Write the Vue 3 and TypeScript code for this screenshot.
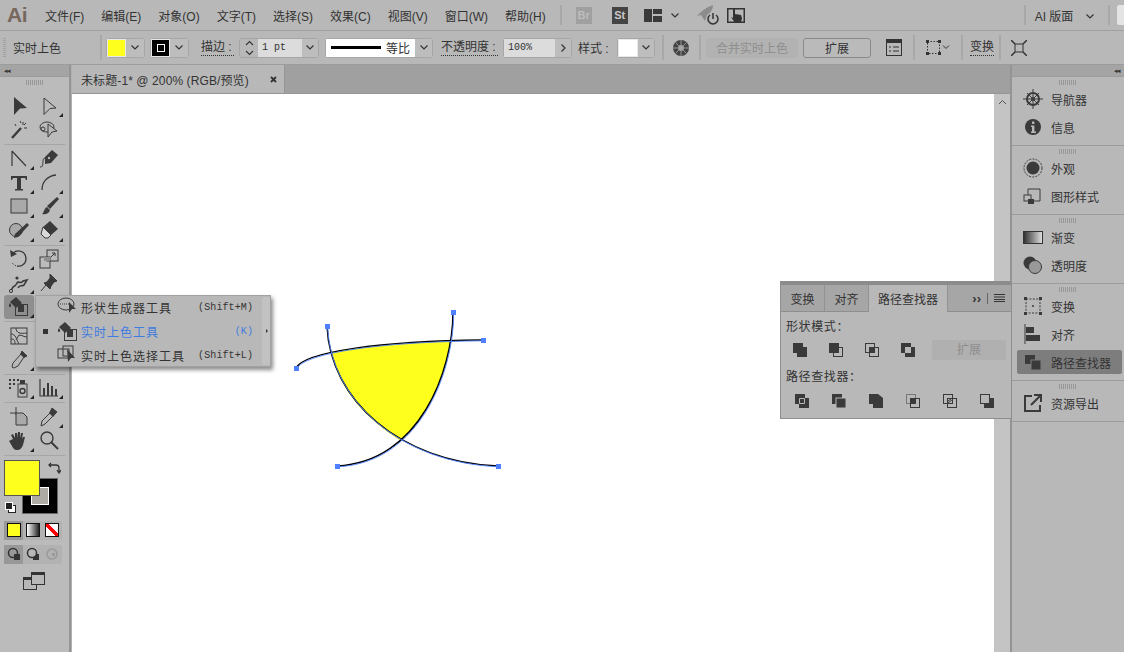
<script setup lang="ts">
interface Tool {
  svg: string
  more?: boolean
  active?: boolean
}

const menus = ['文件(F)', '编辑(E)', '对象(O)', '文字(T)', '选择(S)', '效果(C)', '视图(V)', '窗口(W)', '帮助(H)']

const ink = '#3a3a3a'
const livePaint = `<path d="M2 6l6-5 6 6-6 5z" fill="${ink}"/><path d="M2 7c-1.5 2-1.5 4 0 4s1.5-2 0-4z" fill="${ink}"/><rect x="7.5" y="8.5" width="12" height="11" fill="none" stroke="${ink}"/><rect x="10" y="9" width="6" height="7" fill="${ink}"/>`

const toolGroups: Tool[][][] = [
  [
    [
      { svg: `<path d="M6 2l13 11-7 .5-6 6.5z" fill="${ink}"/>` },
      { svg: `<path d="M6 3l12 10-6 .5-6 6z" fill="none" stroke="${ink}"/>`, more: true },
    ],
    [
      { svg: `<path d="M4 19L13 9" stroke="${ink}" stroke-width="2.4"/><path d="M15 3v3M12 2l1 2M18 4l-2 2M19 9h-3M7 5l1 2M12 9l1 1" stroke="${ink}"/>` },
      { svg: `<ellipse cx="9" cy="8" rx="7" ry="5" fill="none" stroke="${ink}"/><circle cx="5" cy="10" r="2" fill="none" stroke="${ink}"/><path d="M10 5l9 7-5 1-4 5z" fill="#b8b8b8" stroke="${ink}"/>` },
    ],
  ],
  [
    [
      { svg: `<path d="M4 3v15M4 3l14 15" fill="none" stroke="${ink}" stroke-width="1.2"/>`, more: true },
      { svg: `<path d="M2 19c5 1 1-9 5-9" fill="none" stroke="${ink}"/><path d="M7 9l7-7 6 5-7 8-6 1z" fill="${ink}"/><circle cx="11" cy="10" r="1.2" fill="#b8b8b8"/>` },
    ],
    [
      { svg: `<path d="M3 4h16v4h-1l-1-2h-4v11h2v1.5H7V17h2V6H5L4 8H3z" fill="${ink}"/>`, more: true },
      { svg: `<path d="M4 18c0-8 5-14 14-15" fill="none" stroke="${ink}" stroke-width="1.3"/>`, more: true },
    ],
    [
      { svg: `<rect x="3" y="3" width="16" height="14" fill="#a9a9a9" stroke="${ink}"/>`, more: true },
      { svg: `<path d="M19 1l2 2-9 10-3-3z" fill="${ink}"/><path d="M9 11l3 3c-1 4-5 5-8 4 2-1 2-6 5-7z" fill="${ink}"/>`, more: true },
    ],
    [
      { svg: `<circle cx="8" cy="10" r="6.5" fill="#a9a9a9" stroke="${ink}"/><path d="M19 3l2 2-11 12-4 1 1-4z" fill="${ink}"/>`, more: true },
      { svg: `<path d="M12 1l8 8-7 6-8-8z" fill="${ink}"/><path d="M5 7l8 8-3 3H7l-4-4z" fill="#d8d8d8" stroke="${ink}"/>`, more: true },
    ],
  ],
  [
    [
      { svg: `<path d="M5 5c5-4 13-2 13 6 0 5-5 8-9 7" fill="none" stroke="${ink}" stroke-width="1.3"/><path d="M2 2l1 7 6-3z" fill="${ink}"/><path d="M8 18l-4-3" stroke="${ink}" stroke-dasharray="1.5 1.5"/>`, more: true },
      { svg: `<rect x="2" y="9" width="10" height="11" fill="none" stroke="${ink}"/><rect x="9" y="2" width="11" height="11" fill="none" stroke="${ink}"/><rect x="6" y="9" width="6" height="4" fill="#909090"/><path d="M13 9l4-4M14 5h3v3" stroke="${ink}" fill="none"/>` },
    ],
    [
      { svg: `<path d="M3 19c3-8 3-2 6-8 2-3 3 2 6-2l4-1-3 5c-3 2-4-1-6 3" fill="none" stroke="${ink}" stroke-width="1.6"/><circle cx="3" cy="19" r="1.6" fill="#b8b8b8" stroke="${ink}"/><circle cx="9" cy="6" r="1.6" fill="${ink}"/>`, more: true },
      { svg: `<path d="M12 2l7 7-3 1-3 4-1 3-6-6 3-1 3-4zM8 13l-5 6" fill="${ink}" stroke="${ink}"/>` },
    ],
    [{ svg: livePaint, more: true, active: true }, { svg: '' }],
  ],
  [
    [
      { svg: `<rect x="3" y="3" width="16" height="16" fill="none" stroke="${ink}"/><path d="M3 9c5 0 5 5 8 10M8 3c0 5 4 6 11 5M11 10c3 0 5 2 8 2M3 14c3 0 4 1 4 5M11 10L8 15" fill="none" stroke="${ink}"/>` },
      { svg: '' },
    ],
    [
      { svg: `<path d="M14 2l5 5-3 1-6 9-4 2-2-1 1-4 8-9z" fill="#b8b8b8" stroke="${ink}"/><path d="M14 2l5 5-3 2-4-4z" fill="${ink}"/>`, more: true },
      { svg: '' },
    ],
  ],
  [
    [
      { svg: `<path d="M1 2h2v2H1zM5 2h2v2H5zM1 6h2v2H1zM5 6h2v2H5zM1 10h2v2H1zM9 2h2v2H9z" fill="${ink}"/><rect x="10" y="7" width="9" height="13" fill="none" stroke="${ink}"/><circle cx="14.5" cy="14" r="2.5" fill="none" stroke="${ink}" stroke-width="1.4"/><rect x="12" y="3" width="5" height="4" fill="${ink}"/>`, more: true },
      { svg: `<path d="M2 2v17h18" fill="none" stroke="${ink}" stroke-width="1.2"/><path d="M5 11h2v8H5zM9 6h2v13H9zM13 9h2v10h-2zM17 12h2v7h-2z" fill="${ink}"/>`, more: true },
    ],
  ],
  [
    [
      { svg: `<path d="M8 1v8M2 7h7" stroke="${ink}"/><path d="M8 7h7l4 4v8H8z" fill="#a9a9a9" stroke="${ink}"/>` },
      { svg: `<path d="M14 2l5 4-4 4-8 8-4 2 1-5 8-8z" fill="none" stroke="${ink}"/><path d="M14 2l5 4-4 5-4-4z" fill="${ink}"/>`, more: true },
    ],
    [
      { svg: `<path d="M5 9l-2-4 2-1 2 4V3h2v5l1-6h2v6l1-5h2l-1 6 1-2h2l-2 8c-1 3-3 5-6 5-3 0-4-2-5-4L1 11l2-1z" fill="${ink}"/>`, more: true },
      { svg: `<circle cx="9" cy="8" r="6" fill="none" stroke="${ink}" stroke-width="1.4"/><path d="M13 12l7 7" stroke="${ink}" stroke-width="2"/>` },
    ],
  ],
]

const flyout = [
  { label: '形状生成器工具', key: '(Shift+M)', svg: `<ellipse cx="9" cy="7" rx="8" ry="6" fill="none" stroke="${ink}"/><path d="M3 7h9" stroke="${ink}" stroke-dasharray="1 1"/><path d="M12 5l7 7-4 0-3 4z" fill="${ink}"/>` },
  { label: '实时上色工具', key: '(K)', svg: livePaint, current: true },
  { label: '实时上色选择工具', key: '(Shift+L)', svg: `<rect x="1" y="4" width="11" height="9" fill="none" stroke="${ink}"/><rect x="6" y="1" width="10" height="10" fill="none" stroke="${ink}"/><path d="M10 4l8 9-4 0-3 4z" fill="${ink}"/>` },
]

const dockGroups = [
  [
    { label: '导航器', svg: `<circle cx="10" cy="10" r="6" fill="none" stroke="${ink}" stroke-width="2"/><circle cx="10" cy="10" r="2" fill="${ink}"/><path d="M10 0v20M0 10h20M4 4l12 12M16 4L4 16" stroke="${ink}"/>` },
    { label: '信息', svg: `<circle cx="10" cy="10" r="8" fill="${ink}"/><rect x="9" y="4.5" width="2.4" height="2.4" fill="#b8b8b8"/><path d="M8 8.5h3.4v6H13v1.4H8v-1.4h1v-4.6H8z" fill="#b8b8b8"/>` },
  ],
  [
    { label: '外观', svg: `<circle cx="10" cy="10" r="6.5" fill="${ink}"/><circle cx="10" cy="10" r="9" fill="none" stroke="${ink}" stroke-dasharray="2 1.2"/>` },
    { label: '图形样式', svg: `<path d="M5 9V3h12v12H9" fill="none" stroke="${ink}"/><rect x="1" y="9" width="7" height="6" fill="none" stroke="${ink}"/><rect x="5" y="13" width="6" height="5" fill="${ink}"/>` },
  ],
  [
    { label: '渐变', svg: 'grad' },
    { label: '透明度', svg: `<circle cx="7" cy="8" r="6.5" fill="${ink}"/><circle cx="12" cy="12" r="6.5" fill="#999" stroke="${ink}"/>` },
  ],
  [
    { label: '变换', svg: `<rect x="3" y="3" width="14" height="14" fill="none" stroke="${ink}" stroke-dasharray="2 1.4"/><path d="M1 1h3v3H1zM16 1h3v3h-3zM1 16h3v3H1zM16 16h3v3h-3z" fill="${ink}"/><circle cx="10" cy="10" r="1" fill="${ink}"/>` },
    { label: '对齐', svg: `<path d="M2 0v20" stroke="${ink}"/><rect x="3" y="3" width="8" height="6" fill="${ink}"/><rect x="3" y="11" width="14" height="6" fill="${ink}"/>` },
    { label: '路径查找器', svg: `<rect x="2" y="3" width="10" height="9" fill="${ink}"/><rect x="8" y="8" width="10" height="10" fill="${ink}" stroke="#7d7d7d"/>`, active: true },
  ],
  [
    { label: '资源导出', svg: `<path d="M9 3H2v15h15v-6" fill="none" stroke="${ink}" stroke-width="2"/><path d="M8 12l9-9M11 2h7v7" fill="none" stroke="${ink}" stroke-width="2"/>` },
  ],
]

const shapeModes = [
  `<rect x="1" y="1" width="10" height="10" fill="${ink}"/><rect x="5" y="5" width="10" height="10" fill="${ink}"/>`,
  `<rect x="5.5" y="5.5" width="9" height="9" fill="none" stroke="${ink}"/><rect x="1" y="1" width="10" height="10" fill="${ink}"/>`,
  `<rect x="1.5" y="1.5" width="9" height="9" fill="none" stroke="${ink}"/><rect x="5.5" y="5.5" width="9" height="9" fill="none" stroke="${ink}"/><rect x="5" y="5" width="6" height="6" fill="${ink}"/>`,
  `<path d="M1 1h10v4H5v6H1zM11 5h4v10H5v-4h6z" fill="${ink}"/>`,
]

const finderModes = [
  `<rect x="1" y="1" width="10" height="10" fill="${ink}"/><rect x="5" y="5" width="10" height="10" fill="${ink}"/><path d="M5.5 5.5h5v5h-5z" fill="none" stroke="#b8b8b8"/>`,
  `<rect x="1" y="1" width="10" height="10" fill="${ink}"/><rect x="5" y="5" width="10" height="10" fill="${ink}" stroke="#b8b8b8"/>`,
  `<path d="M1 1h7v10H1z" fill="${ink}"/><path d="M5 1h5l5 4v10H5z" fill="${ink}"/>`,
  `<rect x="1.5" y="1.5" width="9" height="9" fill="none" stroke="#777"/><rect x="5.5" y="5.5" width="9" height="9" fill="none" stroke="${ink}"/><rect x="5" y="5" width="6" height="6" fill="${ink}"/>`,
  `<rect x="1.5" y="1.5" width="9" height="9" fill="none" stroke="${ink}"/><rect x="5.5" y="5.5" width="9" height="9" fill="none" stroke="${ink}"/><path d="M6 8l3-2M6 10l4-3" stroke="${ink}"/>`,
  `<rect x="1.5" y="1.5" width="9" height="9" fill="none" stroke="${ink}"/><path d="M11 5h4v10H5v-4h6z" fill="${ink}"/>`,
]

const handles = [
  [296, 368],
  [483, 340],
  [327, 326],
  [453, 312],
  [337, 466],
  [498, 466],
]

// offsets of the artwork inside the canvas
const canvasX = 72
const canvasY = 94
</script>

<template>
  <div class="app">
    <!-- Menu bar -->
    <header class="menubar">
      <span class="logo">Ai</span>
      <div class="menus">
        <span v-for="m in menus" :key="m">{{ m }}</span>
      </div>
      <span class="sep sep-bridge" />
      <span class="app-badge badge-br">Br</span>
      <span class="app-badge badge-st">St</span>
      <svg class="layout-icon" width="18" height="13" viewBox="0 0 18 13">
        <path d="M0 0h8v13H0zM9 0h9v5H9zM9 7h9v6H9z" fill="#3a3a3a" />
      </svg>
      <svg class="chev chev-layout" width="8" height="5" viewBox="0 0 8 5"><path d="M.5.5L4 4 7.5.5" fill="none" stroke="#333" stroke-width="1.2" /></svg>
      <svg class="rocket" width="22" height="20" viewBox="0 0 22 20">
        <path d="M0 11C4 6 10 2 16 0c0 5-3 8-6 10l-2 6-2-3-2-3z" fill="#8c8c8c" />
        <path d="M13 10a5 5 0 1 0 6 0" fill="none" stroke="#333" stroke-width="1.5" />
        <path d="M16 8v6" stroke="#333" stroke-width="1.5" />
      </svg>
      <svg class="hand-box" width="18" height="15" viewBox="0 0 18 15">
        <rect x=".75" y=".75" width="16.5" height="13.5" fill="none" stroke="#333" stroke-width="1.5" />
        <path d="M6 1h2v5l6 1 1 3-1 5H8L4 9l2 1z" fill="#333" />
      </svg>
      <span class="sep sep-ws" />
      <span class="workspace">AI 版面</span>
      <svg class="chev chev-ws" width="8" height="5" viewBox="0 0 8 5"><path d="M.5.5L4 4 7.5.5" fill="none" stroke="#333" stroke-width="1.2" /></svg>
      <span class="sep sep-end" />
      <span class="search-stub" />
    </header>

    <!-- Control bar -->
    <div class="controlbar">
      <span class="grip-v" />
      <span class="cb-title">实时上色</span>
      <span class="sep sep-a" />
      <div class="combo combo-fill">
        <span class="swatch swatch-yellow" />
        <span class="dd"><svg width="8" height="5" viewBox="0 0 8 5"><path d="M.5.5L4 4 7.5.5" fill="none" stroke="#333" stroke-width="1.2" /></svg></span>
      </div>
      <div class="combo combo-stroke">
        <span class="swatch swatch-stroke"><i /></span>
        <span class="dd"><svg width="8" height="5" viewBox="0 0 8 5"><path d="M.5.5L4 4 7.5.5" fill="none" stroke="#333" stroke-width="1.2" /></svg></span>
      </div>
      <span class="cb-link link-stroke">描边 :</span>
      <div class="combo combo-weight">
        <span class="spin">
          <svg width="9" height="16" viewBox="0 0 9 16"><path d="M1 5l3.5-3.5L8 5M1 11l3.5 3.5L8 11" fill="none" stroke="#333" stroke-width="1.1" /></svg>
        </span>
        <span class="field field-weight">1 pt</span>
        <span class="dd"><svg width="8" height="5" viewBox="0 0 8 5"><path d="M.5.5L4 4 7.5.5" fill="none" stroke="#333" stroke-width="1.2" /></svg></span>
      </div>
      <div class="combo combo-line">
        <span class="line-preview"><i /><b>等比</b></span>
        <span class="dd"><svg width="8" height="5" viewBox="0 0 8 5"><path d="M.5.5L4 4 7.5.5" fill="none" stroke="#333" stroke-width="1.2" /></svg></span>
      </div>
      <span class="cb-link link-opacity">不透明度 :</span>
      <div class="combo combo-opacity">
        <span class="field field-opacity">100%</span>
        <span class="dd"><svg width="5" height="8" viewBox="0 0 5 8"><path d="M.5.5L4 4 .5 7.5" fill="none" stroke="#333" stroke-width="1.2" /></svg></span>
      </div>
      <span class="cb-text">样式 :</span>
      <div class="combo combo-style">
        <span class="swatch swatch-white" />
        <span class="dd"><svg width="8" height="5" viewBox="0 0 8 5"><path d="M.5.5L4 4 7.5.5" fill="none" stroke="#333" stroke-width="1.2" /></svg></span>
      </div>
      <span class="sep sep-b" />
      <svg class="wheel" width="16" height="16" viewBox="0 0 16 16">
        <circle cx="8" cy="8" r="8" fill="#444" />
        <circle cx="8" cy="8" r="3" fill="#999" />
        <path d="M8 0v16M0 8h16M2.5 2.5l11 11M13.5 2.5l-11 11" stroke="#aaa" stroke-width=".8" />
      </svg>
      <span class="sep sep-c" />
      <button class="btn btn-disabled">合并实时上色</button>
      <button class="btn btn-expand">扩展</button>
      <svg class="doc-icon" width="16" height="17" viewBox="0 0 16 17">
        <rect x=".5" y=".5" width="15" height="16" fill="none" stroke="#333" />
        <path d="M0 0h16v4H0z" fill="#333" />
        <path d="M3 8h2M7 8h6M3 12h2M7 12h6" stroke="#333" />
      </svg>
      <span class="sep sep-d" />
      <svg class="dots-icon" width="24" height="15" viewBox="0 0 24 15">
        <rect x="1.5" y="1.5" width="12" height="12" fill="none" stroke="#333" stroke-dasharray="1.5 1.5" />
        <path d="M0 0h3v3H0zM12 0h3v3h-3zM0 12h3v3H0zM12 12h3v3h-3z" fill="#333" />
        <path d="M17 5.5l3 3 3-3" fill="none" stroke="#333" />
      </svg>
      <span class="sep sep-e" />
      <span class="cb-link link-transform">变换</span>
      <span class="sep sep-f" />
      <svg class="fit-icon" width="16" height="16" viewBox="0 0 16 16">
        <rect x="4" y="4" width="8" height="8" fill="none" stroke="#333" />
        <path d="M0 0l4 4M16 0l-4 4M0 16l4-4M16 16l-4-4" stroke="#333" stroke-width="1.5" />
      </svg>
    </div>

    <div class="workspace-row">
      <!-- Left toolbar -->
      <aside class="toolbar">
        <div class="dock-head"><span class="collapse">◂◂</span></div>
        <div class="grip-h" />
        <template v-for="(group, g) in toolGroups" :key="g">
          <div class="tool-row" v-for="(row, r) in group" :key="r">
            <div
              v-for="(tool, t) in row"
              :key="t"
              class="tool"
              :class="{ active: tool.active, more: tool.more }"
            >
              <svg v-if="tool.svg" width="22" height="22" viewBox="0 0 22 22" v-html="tool.svg" />
            </div>
          </div>
          <div class="tool-divider" />
        </template>

        <div class="colors">
          <span class="stroke-box"><i /></span>
          <span class="fill-box" />
          <svg class="swap" width="13" height="12" viewBox="0 0 13 12">
            <path d="M1 3h7c2 0 3 1 3 3v5M9 8l2 3 2-3M3 1L1 3l2 2" fill="none" stroke="#333" stroke-width="1.3" />
          </svg>
          <svg class="defaults" width="11" height="11" viewBox="0 0 11 11">
            <rect x="3.5" y="3.5" width="7" height="7" fill="#fff" stroke="#222" />
            <rect x=".5" y=".5" width="7" height="7" fill="#222" stroke="#fff" />
          </svg>
        </div>

        <div class="mode-strip">
          <span class="mode on"><i class="mode-fill" /></span>
          <span class="mode"><i class="mode-grad" /></span>
          <span class="mode"><i class="mode-none" /></span>
        </div>
        <div class="mode-strip draw-strip">
          <span class="mode on">
            <svg width="14" height="14" viewBox="0 0 14 14"><circle cx="6" cy="6" r="4.5" fill="none" stroke="#333" stroke-width="1.5" /><rect x="7" y="7" width="6" height="6" fill="#333" /></svg>
          </span>
          <span class="mode">
            <svg width="14" height="14" viewBox="0 0 14 14"><rect x="7" y="7" width="6" height="6" fill="#333" /><circle cx="6" cy="6" r="4.5" fill="#b8b8b8" stroke="#333" stroke-width="1.5" /></svg>
          </span>
          <span class="mode">
            <svg width="14" height="14" viewBox="0 0 14 14"><circle cx="7" cy="7" r="5" fill="none" stroke="#999" stroke-width="1.5" /><rect x="7" y="6" width="3" height="3" fill="#999" /></svg>
          </span>
        </div>
        <svg class="screen-mode" width="22" height="18" viewBox="0 0 22 18">
          <rect x=".5" y="5.5" width="13" height="12" fill="#b8b8b8" stroke="#333" />
          <rect x="0" y="5" width="14" height="3" fill="#333" />
          <rect x="8.5" y=".5" width="13" height="12" fill="#b8b8b8" stroke="#333" />
          <rect x="8" y="0" width="14" height="3" fill="#333" />
        </svg>
      </aside>
      <div class="divider-v" />

      <!-- Document -->
      <main class="document">
        <div class="tabs">
          <div class="doc-tab">
            <span>未标题-1*  @ 200%  (RGB/预览)</span>
            <svg width="7" height="7" viewBox="0 0 7 7"><path d="M1 1l5 5M6 1L1 6" stroke="#333" stroke-width="1.8" /></svg>
          </div>
        </div>
        <div class="doc-body">
          <div class="canvas">
            <svg class="art" width="922" height="558" :viewBox="`${canvasX} ${canvasY} 922 558`">
              <path d="M331 352C370 345 410 342 451 341C447 375 428 415 401 441C368 420 340 392 331 352Z" fill="#ffff1e" />
              <g fill="none" stroke="#000" stroke-width="1.5">
                <path d="M296 368C304 352 380 341 483 340" />
                <path d="M327 326C330 400 400 462 498 466" />
                <path d="M453 312C453 370 420 462 337 466" />
              </g>
              <g fill="none" stroke="#4f80ff" stroke-width=".9" transform="translate(.7 .8)">
                <path d="M296 368C304 352 380 341 483 340" />
                <path d="M327 326C330 400 400 462 498 466" />
                <path d="M453 312C453 370 420 462 337 466" />
              </g>
              <rect v-for="h in handles" :key="h[0]" :x="h[0] - 2" :y="h[1] - 2" width="5" height="5" fill="#4f80ff" />
            </svg>
          </div>
          <div class="scrollbar">
            <svg width="9" height="6" viewBox="0 0 9 6"><path d="M1 5l3.5-3.5L8 5" fill="none" stroke="#555" /></svg>
          </div>
        </div>
      </main>
      <div class="divider-v thin" />

      <!-- Right dock -->
      <aside class="dock">
        <div class="dock-head right"><span class="collapse">◂◂</span></div>
        <section v-for="(group, g) in dockGroups" :key="g" class="dock-group">
          <div class="grip-h" />
          <div
            v-for="item in group"
            :key="item.label"
            class="dock-item"
            :class="{ active: item.active }"
          >
            <span v-if="item.svg === 'grad'" class="grad-icon" />
            <svg v-else width="20" height="20" viewBox="0 0 20 20" v-html="item.svg" />
            <span>{{ item.label }}</span>
          </div>
        </section>
      </aside>
    </div>

    <!-- Tool flyout -->
    <div class="flyout">
      <div class="fly-list">
        <div v-for="f in flyout" :key="f.label" class="fly-row" :class="{ current: f.current }">
          <i class="bullet" />
          <svg width="20" height="20" viewBox="0 0 20 20" v-html="f.svg" />
          <span class="fly-label">{{ f.label }}</span>
          <span class="fly-key">{{ f.key }}</span>
        </div>
      </div>
      <div class="fly-strip"><i /></div>
    </div>

    <!-- Pathfinder panel -->
    <div class="panel">
      <div class="panel-top" />
      <div class="panel-tabs">
        <span class="ptab">变换</span>
        <span class="ptab">对齐</span>
        <span class="ptab on">路径查找器</span>
        <span class="panel-tools">
          <b>››</b><i class="bar" />
          <svg width="11" height="8" viewBox="0 0 11 8"><path d="M0 .5h11M0 3h11M0 5.5h11M0 7.5h11" stroke="#333" /></svg>
        </span>
      </div>
      <div class="panel-body">
        <div class="plabel">形状模式：</div>
        <div class="icon-row">
          <svg v-for="(s, i) in shapeModes" :key="i" width="16" height="16" viewBox="0 0 16 16" v-html="s" />
          <span class="pbtn">扩展</span>
        </div>
        <div class="plabel second">路径查找器：</div>
        <div class="icon-row wide">
          <svg v-for="(s, i) in finderModes" :key="i" width="16" height="16" viewBox="0 0 16 16" v-html="s" />
        </div>
      </div>
    </div>
  </div>
</template>

<style>
html,
body {
  margin: 0;
  background: #b8b8b8;
}
</style>

<style scoped>
.app {
  position: relative;
  width: 1124px;
  height: 652px;
  overflow: hidden;
  display: flex;
  flex-direction: column;
  background: #b8b8b8;
  color: #333;
  font: 12px "Liberation Sans", "Noto Sans CJK SC", sans-serif;
}

.menubar {
  height: 30px;
  flex: none;
  display: flex;
  align-items: center;
  border-bottom: 1px solid #a0a0a0;
  white-space: nowrap;
}
.logo {
  margin-left: 7px;
  width: 20px;
  font-size: 21px;
  font-weight: 700;
  color: #77675c;
  letter-spacing: -0.5px;
}
.menus {
  margin-left: 18px;
  display: flex;
  gap: 17px;
}
.sep {
  flex: none;
  width: 2px;
  height: 20px;
  background: #a8a8a8;
}
.controlbar .sep { height: 25px; }
.sep-bridge { margin-left: 14px; }
.app-badge {
  flex: none;
  width: 16px;
  height: 17px;
  line-height: 17px;
  text-align: center;
  font-size: 11px;
  font-weight: 700;
}
.badge-br { margin-left: 14px; background: #a0a0a0; color: #bdbdbd; }
.badge-st { margin-left: 20px; background: #444; color: #c8c8c8; }
.layout-icon { margin-left: 16px; flex: none; }
.chev { flex: none; }
.chev-layout { margin-left: 9px; }
.rocket { margin-left: 18px; flex: none; }
.hand-box { margin-left: 8px; flex: none; }
.sep-ws { margin-left: 279px; }
.workspace { margin-left: 9px; }
.chev-ws { margin-left: 13px; margin-top: 3px; }
.sep-end { margin-left: 14px; }
.search-stub {
  margin-left: 7px;
  width: 10px;
  height: 20px;
  flex: none;
  background: #e4e4e4;
  border-radius: 2px 0 0 2px;
}

.controlbar {
  height: 33px;
  flex: none;
  display: flex;
  align-items: center;
  border-bottom: 1px solid #9c9c9c;
}
.grip-v {
  margin-left: 3px;
  width: 3px;
  height: 20px;
  background: repeating-linear-gradient(#a2a2a2 0 1px, transparent 1px 2px);
}
.cb-title { margin-left: 7px; width: 48px; }
.sep-a { margin-left: 39px; }
.combo {
  flex: none;
  display: flex;
  height: 20px;
  box-sizing: border-box;
  border: 1px solid #a6a6a6;
  border-radius: 3px;
}
.dd {
  flex: 1;
  display: flex;
  align-items: center;
  justify-content: center;
  background: #bdbdbd;
}
.swatch { flex: none; width: 19px; border: 1px solid #e8e8e8; box-sizing: border-box; }
.swatch-yellow { background: #ffff1e; }
.swatch-white { background: #fff; width: 20px; }
.swatch-stroke {
  background: #000;
  display: flex;
  align-items: center;
  justify-content: center;
}
.swatch-stroke i {
  width: 6px;
  height: 6px;
  border: 1px solid #fff;
  background: #000;
}
.combo-fill { margin-left: 4px; width: 39px; }
.combo-stroke { margin-left: 5px; width: 39px; }
.cb-link {
  flex: none;
  line-height: 15px;
  border-bottom: 1px dotted #333;
}
.link-stroke { margin-left: 12px; width: 33px; }
.combo-weight { margin-left: 5px; width: 80px; }
.spin {
  flex: none;
  width: 18px;
  display: flex;
  align-items: center;
  justify-content: center;
}
.field {
  flex: none;
  background: #dcdcdc;
  display: flex;
  align-items: center;
  padding-left: 4px;
  box-sizing: border-box;
  font: 10px "Liberation Mono", monospace;
}
.field-weight { width: 44px; }
.combo-line { margin-left: 6px; width: 108px; }
.line-preview {
  flex: none;
  width: 89px;
  background: #fff;
  display: flex;
  align-items: center;
  padding-left: 5px;
  box-sizing: border-box;
}
.line-preview i { width: 50px; height: 3px; background: #000; }
.line-preview b { margin-left: 5px; font-weight: 400; }
.link-opacity { margin-left: 8px; width: 57px; white-space: nowrap; }
.combo-opacity { margin-left: 5px; width: 69px; }
.field-opacity { width: 51px; }
.cb-text { margin-left: 6px; width: 32px; flex: none; }
.combo-style { margin-left: 7px; width: 38px; }
.sep-b { margin-left: 7px; }
.wheel { margin-left: 9px; flex: none; }
.sep-c { margin-left: 10px; }
.btn {
  flex: none;
  height: 20px;
  padding: 0;
  box-sizing: border-box;
  font: inherit;
  color: #333;
  border-radius: 3px;
}
.btn-disabled {
  margin-left: 5px;
  width: 92px;
  border: 1px solid #b2b2b2;
  background: #b2b2b2;
  color: #8e8e8e;
}
.btn-expand {
  margin-left: 5px;
  width: 68px;
  border: 1px solid #8a8a8a;
  background: #bababa;
}
.doc-icon { margin-left: 15px; flex: none; }
.sep-d { margin-left: 11px; }
.dots-icon { margin-left: 11px; flex: none; }
.sep-e { margin-left: 11px; }
.link-transform { margin-left: 7px; width: 24px; }
.sep-f { margin-left: 5px; }
.fit-icon { margin-left: 10px; flex: none; }

.workspace-row {
  flex: 1;
  min-height: 0;
  display: flex;
}

.toolbar {
  width: 69px;
  flex: none;
  background: #bbb;
}
.dock-head {
  height: 11px;
  background: #a4a4a4;
  border-bottom: 1px solid #9c9c9c;
  display: flex;
  align-items: center;
  padding: 0 4px;
}
.dock-head.right { justify-content: flex-end; }
.collapse {
  font-size: 7px;
  line-height: 11px;
  letter-spacing: -1px;
  color: #333;
}
.grip-h {
  width: 18px;
  height: 5px;
  margin: 3px auto;
  background: repeating-linear-gradient(90deg, #989898 0 1px, transparent 1px 2px);
}
.toolbar > .grip-h { margin: 3px auto 9px; }
.tool-row {
  display: grid;
  grid-template-columns: 30px 29px;
  padding-left: 4px;
}
.tool {
  position: relative;
  height: 24px;
  display: flex;
  align-items: center;
  justify-content: center;
}
.tool.active {
  background: #8f8f8f;
  border-radius: 3px;
}
.tool.more::after {
  content: "";
  position: absolute;
  right: 0;
  bottom: 1px;
  border: 2px solid transparent;
  border-right-color: #222;
  border-bottom-color: #222;
}
.tool-divider {
  height: 1px;
  margin: 2px 4px 1.5px;
  background: #a6a6a6;
}
.colors {
  position: relative;
  height: 61px;
  margin-top: 4px;
}
.fill-box,
.stroke-box {
  position: absolute;
  width: 36px;
  height: 36px;
  box-sizing: border-box;
}
.fill-box {
  left: 4px;
  top: 0;
  background: #ffff1e;
  border: 1px solid #555;
}
.stroke-box {
  left: 22px;
  top: 18px;
  background: #000;
  border: 1px solid #666;
  display: flex;
  align-items: center;
  justify-content: center;
}
.stroke-box i {
  width: 18px;
  height: 18px;
  box-sizing: border-box;
  border: 1px solid #fff;
  background: #adaaa4;
}
.swap { position: absolute; left: 48px; top: 2px; }
.defaults { position: absolute; left: 5px; top: 42px; }
.mode-strip {
  display: flex;
  width: 58px;
  height: 19px;
  margin-left: 4px;
  background: #b2b2b2;
  border-radius: 2px;
}
.draw-strip { margin-top: 5px; }
.mode {
  flex: 1;
  display: flex;
  align-items: center;
  justify-content: center;
}
.mode.on { background: #989898; }
.mode i {
  width: 12px;
  height: 12px;
  border: 1px solid #111;
}
.mode-fill { background: #ffff1e; }
.mode-grad { background: linear-gradient(90deg, #fff, #222); }
.mode-none {
  background: linear-gradient(135deg, #fff 38%, #f00 38% 62%, #fff 62%);
  transform: scaleX(-1);
}
.screen-mode { display: block; margin: 8px 0 0 23px; }

.divider-v {
  width: 3px;
  flex: none;
  background: #949494;
  border-right: 1px solid #b0b0b0;
  box-sizing: border-box;
}
.divider-v.thin { width: 2px; border: 0; }

.document {
  flex: 1;
  min-width: 0;
  display: flex;
  flex-direction: column;
}
.tabs {
  height: 29px;
  flex: none;
  box-sizing: border-box;
  background: #a0a0a0;
  border-bottom: 1px solid #969696;
}
.doc-tab {
  width: 213px;
  height: 28px;
  box-sizing: border-box;
  background: #b8b8b8;
  border-right: 1px solid #969696;
  display: flex;
  align-items: center;
  justify-content: space-between;
  padding: 0 7px 0 9px;
  white-space: pre;
  letter-spacing: 0.1px;
}
.doc-body {
  flex: 1;
  min-height: 0;
  display: flex;
}
.canvas {
  flex: 1;
  position: relative;
  background: #fff;
}
.art {
  position: absolute;
  inset: 0;
}
.scrollbar {
  width: 16px;
  flex: none;
  background: #c4c4c4;
  display: flex;
  justify-content: center;
  align-items: flex-start;
  padding-top: 5px;
  box-sizing: border-box;
}

.dock {
  width: 112px;
  flex: none;
  background: #b8b8b8;
}
.dock-group {
  border-bottom: 1px solid #9c9c9c;
  padding-bottom: 2px;
}
.dock-group .grip-h { margin: 3px auto 2px; }
.dock-item {
  height: 24px;
  margin: 0 2px 4px 5px;
  display: flex;
  align-items: center;
  gap: 8px;
  padding-left: 6px;
  border-radius: 2px;
}
.dock-item.active { background: #7d7d7d; }
.grad-icon {
  width: 20px;
  height: 13px;
  flex: none;
  border: 1px solid #333;
  box-sizing: border-box;
  background: linear-gradient(90deg, #333, #ddd);
}

.flyout {
  position: absolute;
  left: 35px;
  top: 295px;
  width: 236px;
  height: 72px;
  display: flex;
  background: #b8b8b8;
  border: 1px solid #a2a2a2;
  box-sizing: border-box;
  box-shadow: 2px 3px 4px rgba(0, 0, 0, 0.45);
}
.fly-list { flex: 1; margin-top: -1px; }
.fly-row {
  height: 24px;
  display: flex;
  align-items: center;
  padding-left: 7px;
}
.bullet { flex: none; width: 5px; height: 5px; }
.current .bullet { background: #333; }
.fly-row svg { margin-left: 9px; flex: none; }
.fly-label { margin-left: 4px; letter-spacing: 1px; }
.current .fly-label,
.current .fly-key { color: #3f7be0; }
.fly-key {
  margin-left: auto;
  margin-right: 9px;
  font: 10px "Liberation Mono", monospace;
  letter-spacing: 0.1px;
}
.fly-strip {
  width: 8px;
  flex: none;
  margin: 1px 0;
  background: #c2c2c2;
  border-radius: 2px;
  display: flex;
  align-items: center;
  justify-content: center;
}
.fly-strip i {
  border: 2.5px solid transparent;
  border-left-color: #333;
  margin-left: 3px;
}

.panel {
  position: absolute;
  left: 780px;
  top: 281px;
  width: 232px;
  height: 138px;
  box-sizing: border-box;
  background: #b8b8b8;
  border: 1px solid #8e8e8e;
  border-top: 0;
}
.panel-top { height: 4px; background: #8c8c8c; }
.panel-tabs {
  height: 27px;
  display: flex;
  background: #a6a6a6;
  border-bottom: 1px solid #8e8e8e;
  box-sizing: border-box;
}
.ptab {
  width: 43px;
  display: flex;
  align-items: center;
  justify-content: center;
  border-right: 1px solid #929292;
}
.ptab.on {
  width: 78px;
  background: #b8b8b8;
  margin-bottom: -1px;
}
.panel-tools {
  margin-left: auto;
  display: flex;
  align-items: center;
  gap: 6px;
  padding-right: 6px;
}
.panel-tools b { font-size: 13px; font-weight: 700; }
.bar { width: 1px; height: 11px; background: #666; }
.panel-body { padding: 7px 5px 0 5px; }
.plabel { line-height: 17px; letter-spacing: 0.6px; }
.plabel.second { margin-top: 9px; }
.icon-row {
  display: flex;
  align-items: center;
  height: 20px;
  margin-top: 4px;
  padding-left: 6px;
  gap: 20px;
}
.icon-row svg { flex: none; }
.icon-row.wide { padding-left: 8px; gap: 21px; margin-top: 5px; }
.pbtn {
  flex: none;
  margin-left: -4px;
  width: 74px;
  height: 20px;
  line-height: 20px;
  text-align: center;
  background: #b0b0b0;
  color: #8e8e8e;
}
</style>
